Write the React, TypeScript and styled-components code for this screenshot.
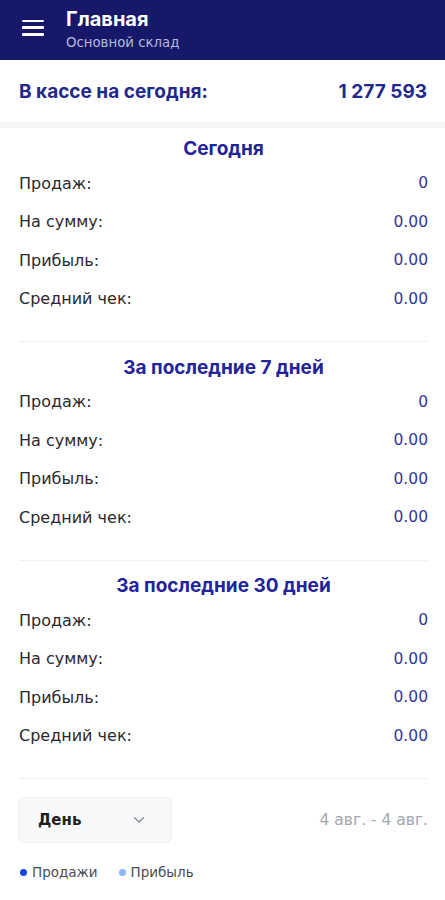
import React from "react";
import styled, { createGlobalStyle } from "styled-components";

const Global = createGlobalStyle`
  html, body { margin: 0; padding: 0; background: #ffffff; }
  body { font-family: Inter, Roboto, sans-serif; }
  * { box-sizing: border-box; }
`;

const Page = styled.div`
  width: 445px;
  min-height: 900px;
  background: #fff;
`;

const Header = styled.header`
  height: 60px;
  background: #16186a;
  display: flex;
  align-items: center;
  padding-left: 22px;
  gap: 22px;
`;

const Burger = styled.div`
  width: 22px;
  height: 16px;
  display: flex;
  flex-direction: column;
  justify-content: space-between;
  margin-top: -5px;
  span {
    display: block;
    height: 2.5px;
    border-radius: 1px;
    background: #fff;
  }
`;

const TitleBlock = styled.div`
  display: flex;
  flex-direction: column;
  margin-top: -2px;
`;

const Title = styled.div`
  color: #fff;
  font-family: Inter, Roboto, sans-serif;
  font-weight: 700;
  font-size: 20px;
  line-height: 24px;
`;

const Subtitle = styled.div`
  color: #b7b9dc;
  font-family: "DejaVu Sans", sans-serif;
  font-size: 13.3px;
  line-height: 18px;
  margin-top: 3px;
`;

const CashRow = styled.div`
  height: 62px;
  display: flex;
  align-items: center;
  justify-content: space-between;
  padding: 0 18px 0 19px;
  color: #23288c;
  font-family: Inter, Roboto, sans-serif;
  font-weight: 700;
  font-size: 19px;
`;

const Band = styled.div`
  height: 6px;
  background: #f5f5f7;
`;

const Content = styled.div`
  padding: 0 17px 0 19px;
`;

const Section = styled.section<{ $first?: boolean }>`
  padding-top: ${(p) => (p.$first ? 6 : 10.5)}px;
  padding-bottom: 23px;
  border-bottom: 1px solid #f0f0f3;
`;

const SectionTitle = styled.h2`
  margin: 0;
  text-align: center;
  font-family: Inter, Roboto, sans-serif;
  font-size: 19px;
  line-height: 30px;
  font-weight: 700;
  color: #23239a;
`;

const Row = styled.div`
  height: 38.5px;
  display: flex;
  align-items: center;
  justify-content: space-between;
`;

const Label = styled.span`
  font-family: "DejaVu Sans", sans-serif;
  font-size: 16px;
  color: #2a2a2e;
`;

const Value = styled.span`
  font-family: "DejaVu Sans", sans-serif;
  font-size: 15.5px;
  color: #34379a;
`;

const Controls = styled.div`
  display: flex;
  align-items: center;
  justify-content: space-between;
  padding-top: 18px;
`;

const Select = styled.div`
  width: 154px;
  height: 46px;
  margin-left: -1px;
  background: #f7f8fa;
  border: 1px solid #eef0f3;
  border-radius: 6px;
  display: flex;
  align-items: center;
  justify-content: space-between;
  padding: 0 26px 0 19px;
  font-family: "DejaVu Sans", sans-serif;
  font-weight: 700;
  font-size: 15px;
  color: #1e1e22;
`;

const DateRange = styled.span`
  font-family: "DejaVu Sans", sans-serif;
  font-size: 15.5px;
  color: #a4a6b0;
`;

const Legend = styled.div`
  display: flex;
  align-items: center;
  gap: 21px;
  padding-top: 21px;
  padding-left: 1px;
`;

const LegendItem = styled.div`
  display: flex;
  align-items: center;
  gap: 5px;
  font-family: "DejaVu Sans", sans-serif;
  font-size: 13.5px;
  color: #4a4a55;
`;

const Dot = styled.span<{ $color: string }>`
  width: 7px;
  height: 7px;
  border-radius: 50%;
  background: ${(p) => p.$color};
`;

const sections = [
  { title: "Сегодня" },
  { title: "За последние 7 дней" },
  { title: "За последние 30 дней" },
];

const rows = [
  ["Продаж:", "0"],
  ["На сумму:", "0.00"],
  ["Прибыль:", "0.00"],
  ["Средний чек:", "0.00"],
];

export default function App() {
  return (
    <Page>
      <Global />
      <Header>
        <Burger>
          <span />
          <span />
          <span />
        </Burger>
        <TitleBlock>
          <Title>Главная</Title>
          <Subtitle>Основной склад</Subtitle>
        </TitleBlock>
      </Header>
      <CashRow>
        <span>В кассе на сегодня:</span>
        <span>1 277 593</span>
      </CashRow>
      <Band />
      <Content>
        {sections.map((s, i) => (
          <Section key={s.title} $first={i === 0}>
            <SectionTitle>{s.title}</SectionTitle>
            {rows.map(([l, v]) => (
              <Row key={l}>
                <Label>{l}</Label>
                <Value>{v}</Value>
              </Row>
            ))}
          </Section>
        ))}
        <Controls>
          <Select>
            <span>День</span>
            <svg width="12" height="8" viewBox="0 0 12 8" fill="none">
              <path d="M1.5 1.8 L6 6 L10.5 1.8" stroke="#8d8f99" strokeWidth="1.5" strokeLinecap="round" strokeLinejoin="round" />
            </svg>
          </Select>
          <DateRange>4 авг. - 4 авг.</DateRange>
        </Controls>
        <Legend>
          <LegendItem>
            <Dot $color="#1746e0" />
            Продажи
          </LegendItem>
          <LegendItem>
            <Dot $color="#8db6f5" />
            Прибыль
          </LegendItem>
        </Legend>
      </Content>
    </Page>
  );
}
